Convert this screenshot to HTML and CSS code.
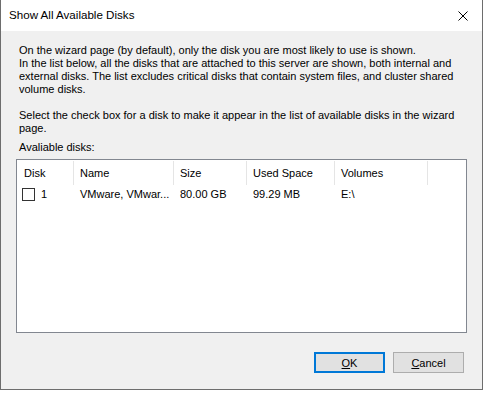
FILE: index.html
```html
<!DOCTYPE html>
<html lang="en">
  <head>
    <meta charset="UTF-8" />
    <title>Show All Available Disks</title>
    <link rel="stylesheet" href="styles.css">
  </head>
  <body>
    <div class="dialog">
      <div class="titlebar">
        <span class="title">Show All Available Disks</span>
        <svg class="close" width="10" height="10" viewBox="0 0 10 10">
          <path d="M0.5 0.5 L9.5 9.5 M9.5 0.5 L0.5 9.5" stroke="#000" stroke-width="1" fill="none" />
        </svg>
      </div>

      <div class="content">
        <p class="text">
          On the wizard page (by default), only the disk you are most likely to use is shown.<br>
          In the list below, all the disks that are attached to this server are shown, both internal and external disks. The list excludes critical disks that contain system files, and cluster shared volume disks.
        </p>
        <p class="text gap">
          Select the check box for a disk to make it appear in the list of available disks in the wizard page.
        </p>
        <p class="text label">Avaliable disks:</p>

        <div class="listview">
          <div class="row header">
            <div class="cell">Disk</div>
            <div class="cell">Name</div>
            <div class="cell">Size</div>
            <div class="cell">Used Space</div>
            <div class="cell">Volumes</div>
          </div>
          <div class="row item">
            <div class="cell disk"><span class="check"></span>1</div>
            <div class="cell">VMware, VMwar...</div>
            <div class="cell">80.00 GB</div>
            <div class="cell">99.29 MB</div>
            <div class="cell">E:\</div>
          </div>
        </div>

        <div class="buttons">
          <button class="btn default"><u>O</u>K</button>
          <button class="btn"><u>C</u>ancel</button>
        </div>
      </div>
    </div>
  </body>
</html>
```

FILE: styles.css
```css
body {
  margin: 0;
  font-family: "Liberation Sans", Arial, sans-serif;
  font-size: 11px;
  color: #000;
  background: #fff;
}
.dialog {
  width: 483px;
  height: 390px;
  box-sizing: border-box;
  border: 1px solid #6d6d6d;
  border-top: none;
  background: #f0f0f0;
  display: flex;
  flex-direction: column;
}
.titlebar {
  height: 31px;
  background: #fff;
  display: flex;
  align-items: center;
  justify-content: space-between;
  padding: 0 9px 0 8px;
}
.title {
  font-size: 11.6px;
  line-height: 14px;
  padding-bottom: 1px;
}
.close {
  display: block;
  margin-right: 5px;
}
.content {
  flex: 1;
  padding: 13px 15px 0 15px;
  display: flex;
  flex-direction: column;
}
.text {
  margin: 0;
  padding-left: 3px;
  line-height: 13px;
  width: 440px;
}
.gap {
  margin-top: 13px;
}
.label {
  margin-top: 6px;
}
.listview {
  margin-top: 5px;
  height: 174px;
  box-sizing: border-box;
  border: 1px solid #828790;
  background: #fff;
}
.row {
  display: grid;
  grid-template-columns: 57px 100px 73px 88px 93px;
}
.header {
  height: 24px;
  margin-top: 1px;
}
.header .cell {
  border-right: 1px solid #e5e5e5;
  line-height: 24px;
  padding-left: 6px;
}
.header .cell:first-child {
  padding-left: 7px;
}
.cell {
  box-sizing: border-box;
  white-space: nowrap;
  overflow: hidden;
}
.item {
  height: 18px;
  align-items: center;
}
.item .cell {
  padding-left: 6px;
}
.item .disk {
  padding-left: 5px;
  display: flex;
  align-items: center;
}
.check {
  width: 13px;
  height: 13px;
  box-sizing: border-box;
  border: 1px solid #333;
  background: #fff;
  margin-right: 6px;
}
.buttons {
  display: flex;
  justify-content: flex-end;
  gap: 8px;
  margin-top: 19px;
  padding-right: 3px;
}
.btn {
  width: 71px;
  height: 21px;
  box-sizing: border-box;
  background: #e1e1e1;
  border: 1px solid #adadad;
  font-family: inherit;
  font-size: 11px;
  padding: 0;
  color: #000;
}
.btn.default {
  border: 2px solid #0078d7;
}
```
